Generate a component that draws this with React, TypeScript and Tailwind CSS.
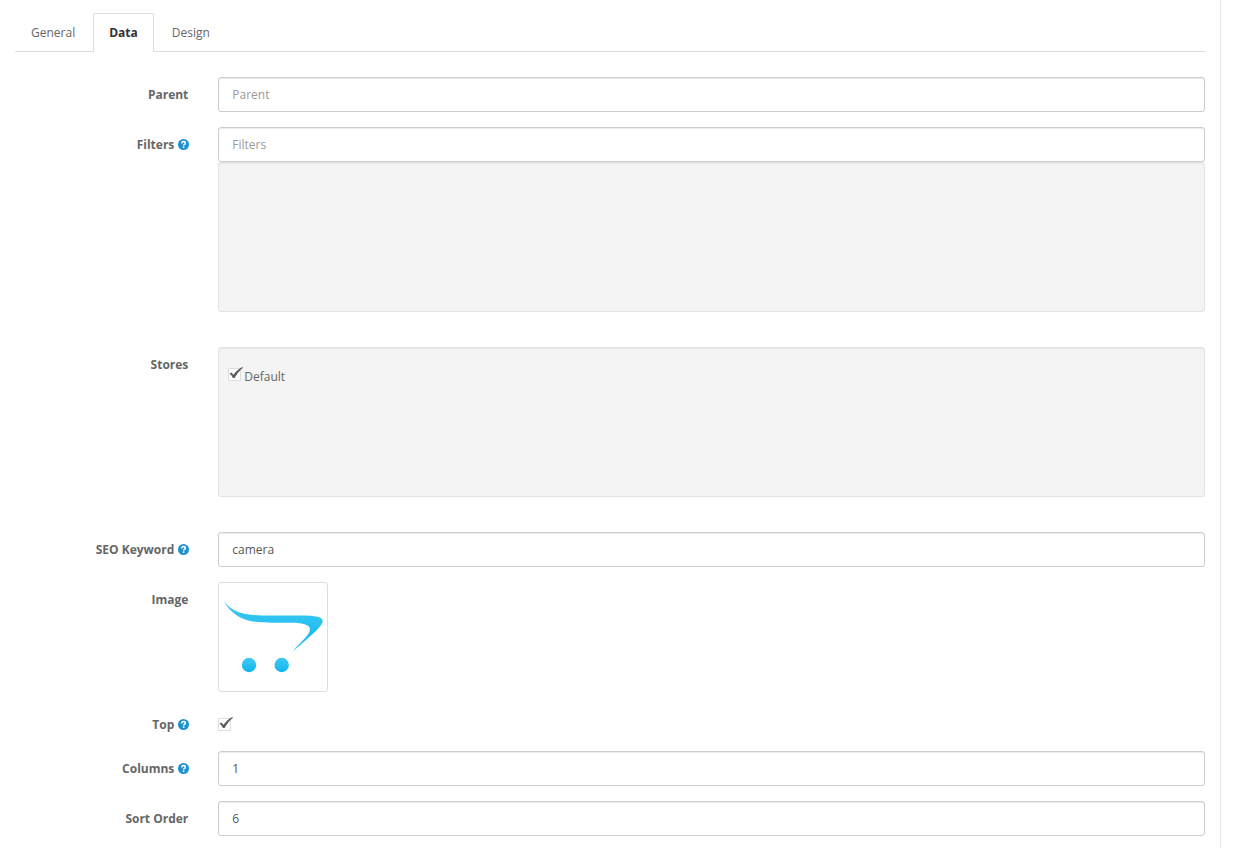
import { useState } from "react";
import type { ReactNode } from "react";

const inputClass =
  "block h-[35px] w-full rounded-[3px] border border-[#ccc] bg-white px-[13px] text-xs text-[#555] shadow-[inset_0_1px_1px_rgba(0,0,0,0.075)] outline-none placeholder:text-[#999] focus:border-[#66afe9]";

const wellClass =
  "h-[150px] rounded-[3px] border border-[#e3e3e3] bg-[#f4f4f4] px-[9px] pt-5 shadow-[inset_0_1px_1px_rgba(0,0,0,0.05)]";

function HelpIcon() {
  return (
    <svg
      viewBox="0 0 12 12"
      className="-mr-px ml-1 h-[11px] w-[11px] shrink-0"
      aria-hidden="true"
    >
      <circle cx="6" cy="6" r="6" fill="#1e91cf" />
      <path
        d="M4 4.7C4.2 3.4 5 2.8 6 2.8c1.200 0 2 .6 2 1.700 0 1.300-1.900 1.300-1.900 2.700"
        fill="none"
        stroke="#fff"
        strokeWidth="1.700"
      />
      <path d="M5.2 8h1.800v1.700H5.200z" fill="#fff" />
    </svg>
  );
}

function CartLogo() {
  return (
    <svg
      viewBox="0 0 108 108"
      className="h-[108px] w-[108px]"
      role="img"
      aria-label="Category image"
    >
      <defs>
        <linearGradient id="swoosh" x1="0" y1="0" x2="0" y2="1">
          <stop offset="0" stopColor="#3fcbf3" />
          <stop offset="1" stopColor="#0fb4ee" />
        </linearGradient>
      </defs>
      <path
        d="M4.7 18C10 25 17 29.500 27 31C35 32.400 43 32.500 52 32.500L81 32.600C93 32.700 103.700 33 103.700 38.200C103.700 41.500 98 47 92 52.500L73.700 68.500C80 60.500 91 52 91 46.500C91 40.300 80 39.700 68 39.700L55 39.700C42 39.600 33 38.900 26 36.400C16 32.800 9 26 4.700 18Z"
        fill="url(#swoosh)"
      />
      <circle cx="30" cy="82" r="7.200" fill="url(#swoosh)" />
      <circle cx="62.700" cy="82" r="7.200" fill="url(#swoosh)" />
    </svg>
  );
}

interface CheckboxProps {
  id: string;
  defaultChecked?: boolean;
}

function Checkbox({ id, defaultChecked }: CheckboxProps) {
  return (
    <span className="relative block h-[13px] w-[13px] shrink-0">
      <input
        id={id}
        type="checkbox"
        defaultChecked={defaultChecked}
        className="peer block h-full w-full appearance-none rounded-[1px] border border-[#dcdcdc] bg-white"
      />
      <svg
        viewBox="0 0 15 13"
        className="pointer-events-none absolute -top-px left-0 hidden h-[13px] w-[15px] peer-checked:block"
        aria-hidden="true"
      >
        <path
          d="M1.500 6.500L3.300 5.400L5.600 7.700C8 4.400 10.700 1.800 14.200 0L14.900 0.700C11.700 3.400 9 6.700 6.600 11H4.900C4.100 9.300 3 7.800 1.500 6.500Z"
          fill="#5e5e5e"
        />
      </svg>
    </span>
  );
}

interface RowProps {
  label: string;
  htmlFor: string;
  help?: boolean;
  children: ReactNode;
}

function Row({ label, htmlFor, help, children }: RowProps) {
  return (
    <div className="flex">
      <div className="w-1/6 shrink-0 px-[15px] pt-[9px]">
        <label
          htmlFor={htmlFor}
          className="flex items-center justify-end font-bold"
        >
          {label}
          {help && <HelpIcon />}
        </label>
      </div>
      <div className="min-w-0 flex-1 px-[15px]">{children}</div>
    </div>
  );
}

const tabs = ["General", "Data", "Design"];

export default function App() {
  const [active, setActive] = useState("Data");

  return (
    <div className="min-h-screen bg-white pr-[17px] font-['Open_Sans',sans-serif] text-xs leading-[17px] text-[#666]">
      <div className="min-h-screen border-r border-[#e8e8e8] pt-[13px]">
        <div
          role="tablist"
          className="mx-[15px] mb-[25px] flex gap-[2px] border-b border-[#ddd]"
        >
          {tabs.map((tab) => (
            <button
              key={tab}
              type="button"
              role="tab"
              aria-selected={tab === active}
              onClick={() => setActive(tab)}
              className={
                tab === active
                  ? "-mb-px rounded-t-[2px] border border-[#ddd] border-b-white bg-white px-[15px] py-[10px] font-bold text-[#333]"
                  : "-mb-px border border-transparent px-[15px] py-[10px] text-[#666]"
              }
            >
              {tab}
            </button>
          ))}
        </div>

        <form className="flex flex-col gap-[15px] pb-3">
          <Row label="Parent" htmlFor="parent">
            <input id="parent" placeholder="Parent" className={inputClass} />
          </Row>
          <Row label="Filters" htmlFor="filters" help>
            <input id="filters" placeholder="Filters" className={inputClass} />
            <div className={`${wellClass} mb-5`} />
          </Row>
          <Row label="Stores" htmlFor="store-default">
            <div className={`${wellClass} mb-5`}>
              <div className="flex">
                <Checkbox id="store-default" defaultChecked />
                <label htmlFor="store-default" className="pl-[3px]">
                  Default
                </label>
              </div>
            </div>
          </Row>
          <Row label="SEO Keyword" htmlFor="keyword" help>
            <input id="keyword" defaultValue="camera" className={inputClass} />
          </Row>
          <Row label="Image" htmlFor="image">
            <button
              id="image"
              type="button"
              className="block rounded-[3px] border border-[#ddd] bg-white"
            >
              <CartLogo />
            </button>
          </Row>
          <Row label="Top" htmlFor="top" help>
            <div className="h-[29px] pt-[11px]">
              <Checkbox id="top" defaultChecked />
            </div>
          </Row>
          <Row label="Columns" htmlFor="columns" help>
            <input id="columns" defaultValue="1" className={inputClass} />
          </Row>
          <Row label="Sort Order" htmlFor="sort-order">
            <input id="sort-order" defaultValue="6" className={inputClass} />
          </Row>
        </form>
      </div>
    </div>
  );
}
